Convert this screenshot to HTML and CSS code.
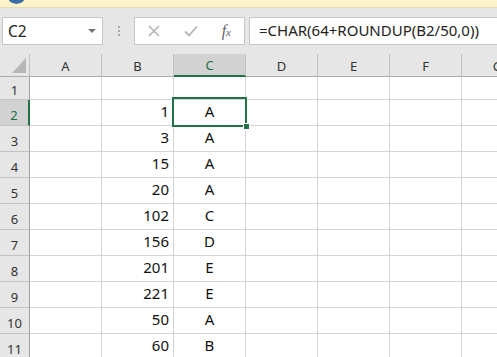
FILE: index.html
```html
<!DOCTYPE html>
<html lang="en">
<head>
  <meta charset="UTF-8" />
  <title>Book1 - Excel</title>
  <link rel="stylesheet" href="styles.css">
</head>
<body>
  <div class="msgbar"><span class="info-dot"></span></div>

  <div class="toolbar">
    <div class="namebox">
      <span>C2</span>
      <span class="drop"></span>
    </div>
    <div class="grip"><i></i><i></i><i></i></div>
    <div class="fx-tools">
      <svg class="tool" width="14" height="14" viewBox="0 0 14 14">
        <path d="M2 2 L12 12 M12 2 L2 12" stroke="#b4b4b4" stroke-width="1.6" fill="none" />
      </svg>
      <svg class="tool" width="16" height="14" viewBox="0 0 16 14">
        <path d="M2 7.5 L6 11.5 L14 2.5" stroke="#b4b4b4" stroke-width="1.8" fill="none" />
      </svg>
      <span class="fx">f<small>x</small></span>
    </div>
    <div class="formula">=CHAR(64+ROUNDUP(B2/50,0))</div>
  </div>

  <div class="sheet">
    <div class="row head">
      <div class="corner">
        <svg width="29" height="22" viewBox="0 0 29 22"><polygon points="26,4 26,19 12,19" fill="#b7b7b7" /></svg>
      </div>
      <div class="col">A</div><div class="col">B</div><div class="col active">C</div><div class="col">D</div>
      <div class="col">E</div><div class="col">F</div><div class="col">G</div>
    </div>

    <div class="row first">
      <div class="num">1</div><div></div><div></div><div></div><div></div><div></div><div></div><div></div>
    </div>
    <div class="row">
      <div class="num active">2</div><div></div><div class="val">1</div>
      <div class="letter selected">A<span class="sel-box"><span class="handle"></span></span></div>
      <div></div><div></div><div></div><div></div>
    </div>
    <div class="row">
      <div class="num">3</div><div></div><div class="val">3</div><div class="letter">A</div><div></div><div></div><div></div><div></div>
    </div>
    <div class="row">
      <div class="num">4</div><div></div><div class="val">15</div><div class="letter">A</div><div></div><div></div><div></div><div></div>
    </div>
    <div class="row">
      <div class="num">5</div><div></div><div class="val">20</div><div class="letter">A</div><div></div><div></div><div></div><div></div>
    </div>
    <div class="row">
      <div class="num">6</div><div></div><div class="val">102</div><div class="letter">C</div><div></div><div></div><div></div><div></div>
    </div>
    <div class="row">
      <div class="num">7</div><div></div><div class="val">156</div><div class="letter">D</div><div></div><div></div><div></div><div></div>
    </div>
    <div class="row">
      <div class="num">8</div><div></div><div class="val">201</div><div class="letter">E</div><div></div><div></div><div></div><div></div>
    </div>
    <div class="row">
      <div class="num">9</div><div></div><div class="val">221</div><div class="letter">E</div><div></div><div></div><div></div><div></div>
    </div>
    <div class="row">
      <div class="num">10</div><div></div><div class="val">50</div><div class="letter">A</div><div></div><div></div><div></div><div></div>
    </div>
    <div class="row">
      <div class="num">11</div><div></div><div class="val">60</div><div class="letter">B</div><div></div><div></div><div></div><div></div>
    </div>
  </div>
</body>
</html>
```

FILE: styles.css
```css
* { box-sizing: border-box; margin: 0; padding: 0; }
body {
  font-family: 'Noto Sans', sans-serif;
  background: #e6e6e6;
  color: #222;
  width: 497px;
  height: 357px;
  overflow: hidden;
}

/* yellow message strip at the very top */
.msgbar {
  position: relative;
  height: 8px;
  background: #fdf3c8;
  border-bottom: 1px solid #e3dcb8;
  overflow: hidden;
}

.info-dot {
  position: absolute;
  left: 7px;
  top: -15px;
  width: 19px;
  height: 19px;
  border-radius: 50%;
  background: #3c6da8;
}

/* name box + formula bar */
.toolbar {
  display: flex;
  align-items: center;
  height: 46px;
  padding-left: 2px;
}

.namebox {
  display: flex;
  align-items: center;
  justify-content: space-between;
  width: 101px;
  height: 28px;
  background: #fff;
  border: 1px solid #c6c6c6;
  padding: 0 5px 0 5px;
  font-size: 15.5px;
  color: #222;
}

.drop {
  width: 0;
  height: 0;
  border-left: 4px solid transparent;
  border-right: 4px solid transparent;
  border-top: 4px solid #777;
  margin-right: 1px;
}

.grip {
  display: flex;
  flex-direction: column;
  gap: 2px;
  width: 31px;
  align-items: center;
}

.grip i {
  width: 2px;
  height: 2px;
  background: #a8a8a8;
}

.fx-tools {
  display: flex;
  align-items: center;
  justify-content: space-between;
  width: 111px;
  height: 28px;
  background: #fff;
  border: 1px solid #c6c6c6;
  padding: 0 13px 0 12px;
}

.fx {
  font-family: 'Liberation Serif', serif;
  font-style: italic;
  font-size: 16px;
  color: #666;
}

.fx small {
  font-size: 11px;
}

.formula {
  flex: 1;
  height: 28px;
  margin-left: 4px;
  background: #fff;
  border: 1px solid #c6c6c6;
  border-right: none;
  padding-left: 9px;
  font-size: 15px;
  line-height: 25px;
  color: #222;
  white-space: nowrap;
}

/* grid */
.row {
  display: grid;
  grid-template-columns: 30px repeat(7, 72px);
  height: 26px;
  background: #fff;
}

.row > div {
  border-right: 1px solid #d4d4d4;
  border-bottom: 1px solid #d4d4d4;
}

.row.first { height: 23px; }

.row.head {
  height: 23px;
  background: #e6e6e6;
}

.row.head > div {
  border-bottom: 1px solid #ababab;
  border-right: 1px solid #c2c2c2;
}

.corner { position: relative; }
.corner svg { display: block; }

.col {
  display: flex;
  align-items: center;
  justify-content: center;
  font-size: 13px;
  color: #333;
  padding-top: 1px;
}

.col.active {
  background: #d2d2d2;
  color: #217346;
  border-bottom: 2px solid #217346 !important;
}

.row > .num {
  display: flex;
  align-items: center;
  justify-content: center;
  background: #e6e6e6;
  border-right: 1px solid #9e9e9e;
  border-bottom: 1px solid #c2c2c2;
  font-size: 13px;
  color: #333;
  padding-top: 4px;
}

.row > .num.active {
  background: #d2d2d2;
  color: #217346;
  border-right: 2px solid #217346;
}

.val,
.letter {
  display: flex;
  align-items: flex-end;
  font-size: 15px;
  line-height: 18px;
  padding-bottom: 5px;
  color: #111;
}

.val {
  justify-content: flex-end;
  padding-right: 4px;
}

.letter { justify-content: center; }

.selected { position: relative; }

.sel-box {
  position: absolute;
  left: -2px;
  top: -3px;
  right: -2px;
  bottom: -2px;
  border: 2px solid #217346;
}

.handle {
  position: absolute;
  right: -5px;
  bottom: -5px;
  width: 7px;
  height: 7px;
  background: #217346;
  border: 1px solid #fff;
}
```
